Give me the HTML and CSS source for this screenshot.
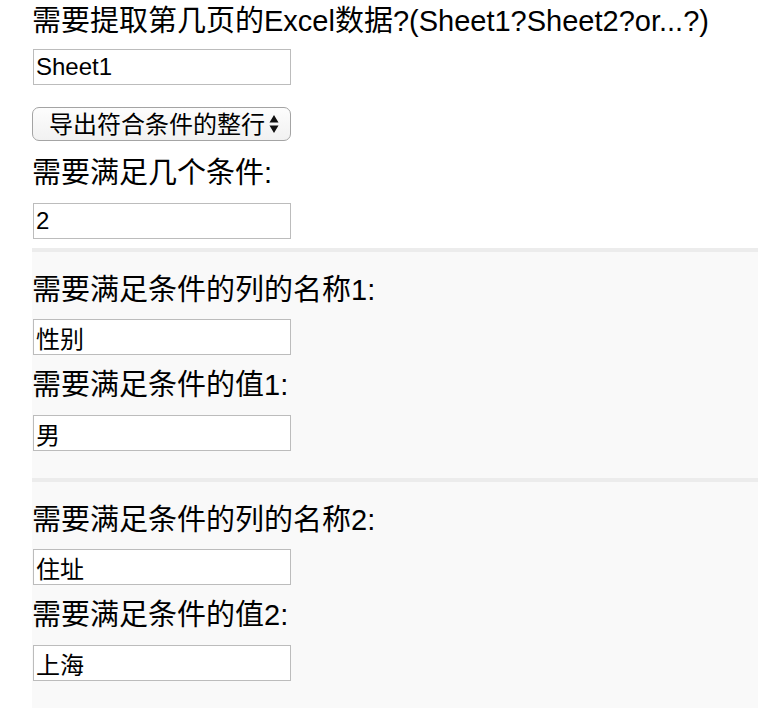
FILE: index.html
```html
<!DOCTYPE html>
<html lang="zh">
<head>
<meta charset="utf-8">
<title>Excel</title>
<link rel="stylesheet" href="styles.css">
</head>
<body>
<div class="page">
  <div class="label title">需要提取第几页的Excel数据?(Sheet1?Sheet2?or...?)</div>
  <input class="field first" type="text" value="Sheet1">
  <div class="select-wrap">
    <select class="select">
      <option>导出符合条件的整行</option>
    </select>
    <svg class="arrows" width="10" height="18" viewBox="0 0 10 18"><path d="M5 0 L9.5 7.5 L0.5 7.5 Z M5 18 L9.5 10.5 L0.5 10.5 Z" fill="#111"/></svg>
  </div>
  <div class="label count">需要满足几个条件:</div>
  <input class="field" type="text" value="2">

  <div class="cond">
    <div class="label">需要满足条件的列的名称1:</div>
    <input class="field" type="text" value="性别">
    <div class="label next">需要满足条件的值1:</div>
    <input class="field" type="text" value="男">
  </div>
  <div class="cond">
    <div class="label">需要满足条件的列的名称2:</div>
    <input class="field" type="text" value="住址">
    <div class="label next">需要满足条件的值2:</div>
    <input class="field" type="text" value="上海">
  </div>
</div>
</body>
</html>
```

FILE: styles.css
```css
html, body {
  margin: 0;
  padding: 0;
  background: #fff;
}
body {
  font-family: "Liberation Sans", "Noto Sans CJK SC", sans-serif;
  color: #000;
}
.page {
  padding-left: 32px;
}
.label {
  font-size: 29px;
  line-height: 36px;
  height: 36px;
  white-space: nowrap;
}
.title {
  padding-top: 3px;
}
.field {
  display: block;
  box-sizing: border-box;
  width: 258px;
  height: 36px;
  margin: 10px 0 0 1px;
  padding: 0 2px;
  border: 1px solid #bcbcbc;
  background: #fff;
  font-family: "Liberation Sans", "Noto Sans CJK SC", sans-serif;
  font-size: 24px;
  color: #000;
  outline: none;
}
.select-wrap {
  position: relative;
  width: 259px;
  margin-top: 22px;
}
.select {
  display: block;
  -webkit-appearance: none;
  appearance: none;
  box-sizing: border-box;
  width: 259px;
  height: 34px;
  margin: 0;
  padding: 0 0 0 16px;
  border: 1px solid #a4a4a4;
  border-radius: 7px;
  background: linear-gradient(#fdfdfd, #f1f1f1);
  font-family: "Liberation Sans", "Noto Sans CJK SC", sans-serif;
  font-size: 24px;
  color: #000;
}
.arrows {
  position: absolute;
  right: 12px;
  top: 8px;
}
.count {
  margin-top: 14px;
}
.count + .field {
  margin-top: 12px;
}
.cond {
  margin-top: 9px;
  border-top: 4px solid #ececec;
  background: #f9f9f9;
  padding: 20px 0 27px;
}
.cond .field {
  margin-top: 11px;
}
.cond .next {
  margin-top: 12px;
}
.cond .next + .field {
  margin-top: 12px;
}
.cond + .cond {
  margin-top: 0;
}
```
